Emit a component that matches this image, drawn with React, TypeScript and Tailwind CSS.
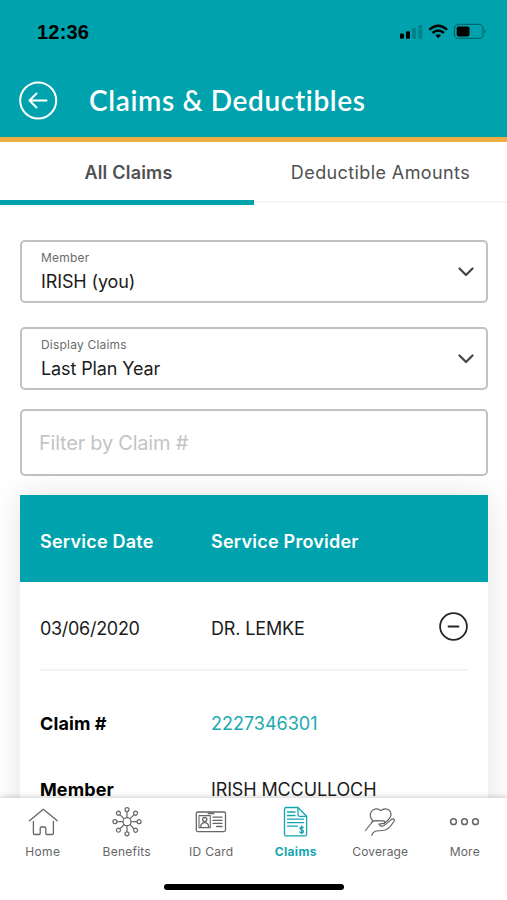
import React, { useState } from 'react';

const HomeIcon = () => (
  <svg width="32" height="32" viewBox="0 0 32 32" fill="none" stroke="currentColor" strokeWidth="1.3" strokeLinecap="round" strokeLinejoin="round">
    <path d="M2.5 14.7 L16.3 3.3 L30.3 14.7" />
    <path d="M6.4 15.5 V27.3 Q6.4 28.5 7.6 28.5 H12.2 Q13.2 28.5 13.2 27.3 V22.3 Q13.2 21 14.4 21 H17.6 Q18.8 21 18.8 22.3 V27.3 Q18.8 28.5 19.8 28.5 H25.2 Q26.4 28.5 26.4 27.3 V15.5" />
  </svg>
);

const BenefitsIcon = () => (
  <svg width="32" height="32" viewBox="0 0 32 32" fill="none" stroke="currentColor" strokeWidth="1.2">
    <circle cx="16" cy="15.7" r="4" />
    {[0, 45, 90, 135, 180, 225, 270, 315].map((angle) => (
      <g key={angle} transform={`rotate(${angle} 16 15.7)`}>
        <path d="M16 11.7 V5.6" />
        <circle cx="16" cy="3.6" r="2" />
      </g>
    ))}
  </svg>
);

const IdCardIcon = () => (
  <svg width="32" height="32" viewBox="0 0 32 32" fill="none" stroke="currentColor" strokeWidth="1.3" strokeLinecap="round" strokeLinejoin="round">
    <rect x="1.3" y="6" width="29.2" height="19.6" rx="1.5" />
    <path d="M13.5 7.4 H18.5" strokeWidth="1.8" />
    <rect x="4" y="9.6" width="11.3" height="12" strokeWidth="1.1" />
    <circle cx="9.7" cy="13.6" r="2.1" />
    <path d="M5.8 20.6 C6 17.6 7.7 16.6 9.7 16.6 S13.4 17.6 13.6 20.6" />
    <path d="M18 11.1 H27 M18 14.3 H27 M18 17.4 H27 M21.5 20.5 H27" />
  </svg>
);

const ClaimsIcon = () => (
  <svg width="32" height="32" viewBox="0 0 32 32" fill="none" stroke="currentColor" strokeWidth="1.3" strokeLinecap="round" strokeLinejoin="round">
    <path d="M18 1.5 H6 Q4.5 1.5 4.5 3 V28.4 Q4.5 29.9 6 29.9 H25.1 Q26.6 29.9 26.6 28.4 V10.3 Z" />
    <path d="M18 1.7 V8.8 Q18 10.3 19.5 10.3 H26.5" />
    <path d="M7.5 6 H15 M7.5 9.5 H15 M7.5 13.2 H23.5 M7.5 16.7 H23.5 M7.5 20.2 H17.5" />
    <path d="M23.2 21.7 C22.4 20.6 20 20.7 20 22.4 C20 24.3 23.5 23.4 23.5 25.4 C23.5 27.2 20.7 27.2 19.8 26 M21.7 19.9 V27.7" />
  </svg>
);

const CoverageIcon = () => (
  <svg width="32" height="32" viewBox="0 0 32 32" fill="none" stroke="currentColor" strokeWidth="1.2" strokeLinecap="round" strokeLinejoin="round">
    <path d="M8.6 14.5 C5.8 11.5 6.2 7.8 7.3 5.8 C9.3 2.2 14.2 2 16.8 4.6 C19.3 2 24.6 2.2 26.4 5.8 C27.8 8.8 26.5 11.8 23.8 14.3 L20 17.8" />
    <path d="M1.5 24.5 L7 17.5 C7.8 15.8 9.5 14.6 11.5 14.6 L19.5 14.8 C21.3 14.9 21.2 17.2 19.5 17.4 L15 18.2 C16 20.3 17.5 20.6 19.5 19.7 C22 18.5 24.8 15.8 27 13.7 C29 12 31.2 13.3 30 15.2 C27.8 18.8 24.8 22.8 21 24 C17.5 25 13.5 24.5 11.2 25.3 C9.6 25.9 8.4 27.5 7.7 29.2" />
  </svg>
);

const MoreIcon = () => (
  <svg width="32" height="32" viewBox="0 0 32 32" fill="none" stroke="currentColor" strokeWidth="1.5">
    <circle cx="4.5" cy="15.7" r="2.9" />
    <circle cx="15.5" cy="15.7" r="2.9" />
    <circle cx="26.5" cy="15.7" r="2.9" />
  </svg>
);

const NAV_ITEMS = [
  { label: 'Home', icon: HomeIcon, tracking: 'tracking-[0.4px] pl-px' },
  { label: 'Benefits', icon: BenefitsIcon, tracking: 'tracking-[0.25px]' },
  { label: 'ID Card', icon: IdCardIcon, tracking: 'tracking-[0.3px]' },
  { label: 'Claims', icon: ClaimsIcon, tracking: 'tracking-[0.35px]' },
  { label: 'Coverage', icon: CoverageIcon, tracking: 'tracking-[0.15px]' },
  { label: 'More', icon: MoreIcon, tracking: 'tracking-[0.2px]' },
];

const StatusBar = () => (
  <div className="flex h-16 items-center justify-between pl-[37px] pr-5">
    <span className="font-['Liberation_Sans',sans-serif] text-[20px] font-bold leading-none tracking-[0.2px] text-black">12:36</span>
    <svg width="90" height="20" viewBox="0 0 90 20" className="text-black">
      <g fill="currentColor">
        <rect x="3" y="11.5" width="4" height="5.2" rx="1" />
        <rect x="9" y="9.2" width="4" height="7.5" rx="1" />
        <rect x="15" y="6" width="4" height="10.7" rx="1" opacity="0.2" />
        <rect x="21.3" y="3" width="4" height="13.7" rx="1" opacity="0.2" />
        <path d="M41.2 16.3 L38.4 13.3 Q41.2 11.2 44 13.3 Z" />
      </g>
      <g fill="none" stroke="currentColor" strokeWidth="2.4">
        <path d="M32.3 7.6 Q41.2 -0.2 50.1 7.6" />
        <path d="M35.5 11 Q41.2 6 46.9 11" />
      </g>
      <rect x="57.5" y="2.4" width="28.5" height="14" rx="4" fill="none" stroke="currentColor" strokeWidth="1.2" opacity="0.35" />
      <rect x="59.7" y="4.4" width="12.8" height="10" rx="1.8" fill="currentColor" />
      <path d="M87.4 7.2 Q89.8 9.4 87.4 11.6 Z" fill="currentColor" opacity="0.4" />
    </svg>
  </div>
);

interface SelectBoxProps {
  label: string;
  value: string;
}

const SelectBox: React.FC<SelectBoxProps> = ({ label, value }) => (
  <button type="button" className="flex h-[63px] w-full items-center justify-between rounded-[5px] border-2 border-[#c1c1c1] bg-white pl-[19px] pr-3 text-left">
    <span className="flex flex-col pt-px">
      <span className="text-[12px] leading-[16px] tracking-[0.2px] text-[#6b6b6b]">{label}</span>
      <span className="mt-1 text-[18px] leading-[24px] tracking-[-0.12px] text-[#1c1c1c]">{value}</span>
    </span>
    <svg width="16" height="10" viewBox="0 0 16 10" fill="none" stroke="#444" strokeWidth="2.2" strokeLinecap="round" strokeLinejoin="round" className="mt-px">
      <path d="M1.5 1.5 L8 8 L14.5 1.5" />
    </svg>
  </button>
);

export default function App() {
  const [tab, setTab] = useState<'claims' | 'deductible'>('claims');
  const [filter, setFilter] = useState('');

  return (
    <div className="flex h-[900px] w-[507px] flex-col overflow-hidden bg-white font-[Inter,sans-serif]">
      {/* Header */}
      <header className="h-[142px] shrink-0 border-b-[5px] border-[#efad44] bg-[#00a3ad]">
        <StatusBar />
        <div className="flex h-[73px] items-center pl-[19px]">
          <button type="button" aria-label="Back">
            <svg width="39" height="39" viewBox="0 0 39 39" fill="none" stroke="white" strokeWidth="2" strokeLinecap="round" strokeLinejoin="round">
              <circle cx="19.2" cy="19.5" r="18" />
              <path d="M27.5 19.5 H10.5 M17.5 12.5 L10.5 19.5 L17.5 26.5" />
            </svg>
          </button>
          <h1 className="ml-[31px] whitespace-nowrap pb-0.5 font-[Lato,sans-serif] text-[28px] font-semibold leading-none tracking-[0.65px] text-white">Claims &amp; Deductibles</h1>
        </div>
      </header>

      {/* Tabs */}
      <div className="flex h-[63px] shrink-0 text-[18px] text-[#505050]">
        <button
          type="button"
          onClick={() => setTab('claims')}
          className={`w-[254px] whitespace-nowrap pl-[3px] ${tab === 'claims' ? 'border-b-[5px] border-[#00a3ad] pt-0.5 font-semibold tracking-[0.2px]' : 'border-b-2 border-[#f5f5f5] tracking-[0.4px]'}`}
        >
          All Claims
        </button>
        <button
          type="button"
          onClick={() => setTab('deductible')}
          className={`flex-1 whitespace-nowrap ${tab === 'deductible' ? 'border-b-[5px] border-[#00a3ad] font-semibold' : 'mb-0.5 border-b-2 border-[#f5f5f5] pt-0.5 tracking-[0.4px]'}`}
        >
          Deductible Amounts
        </button>
      </div>

      <main className="min-h-0 flex-1 overflow-hidden pl-5 pr-[19px] pt-[35px]">
        {/* Filters */}
        <div className="flex flex-col gap-6">
          <SelectBox label="Member" value="IRISH (you)" />
          <SelectBox label="Display Claims" value="Last Plan Year" />
        </div>
        <input
          value={filter}
          onChange={(e) => setFilter(e.target.value)}
          placeholder="Filter by Claim #"
          className="mt-[19px] block h-[67px] w-full rounded-[5px] border-2 border-[#c1c1c1] bg-white px-[17px] text-[20px] tracking-[-0.23px] outline-none placeholder:text-[#c4c4c4]"
        />

        {/* Claims table */}
        <section className="mt-[19px] h-[400px] bg-white text-[18px] text-[#1c1c1c] shadow-[0_0_30px_rgba(0,0,0,0.11)]">
          <div className="grid h-[87px] grid-cols-[171px_1fr] items-center bg-[#00a3ad] px-5 pt-[5px] font-semibold tracking-[0.23px] text-white">
            <span>Service Date</span>
            <span>Service Provider</span>
          </div>
          <div className="mx-5 grid h-[89px] grid-cols-[171px_1fr_29px] items-center border-b-2 border-[#f4f4f4]">
            <span className="pt-1.5 tracking-[-0.3px]">03/06/2020</span>
            <span className="pt-1.5 tracking-[-0.15px]">DR. LEMKE</span>
            <svg width="29" height="29" viewBox="0 0 29 29" fill="none" stroke="#262626" strokeWidth="1.8" strokeLinecap="round" className="mt-0.5">
              <circle cx="14.5" cy="14.5" r="13.4" />
              <path d="M9.5 14.5 H19.5" />
            </svg>
          </div>
          <dl className="grid grid-cols-[171px_1fr] gap-y-[38px] px-5 pt-[39px] leading-7">
            <dt className="font-bold tracking-[0.1px] text-black">Claim #</dt>
            <dd className="text-[#1ba9b2]">2227346301</dd>
            <dt className="font-bold tracking-[0.1px] text-black">Member</dt>
            <dd className="tracking-[-0.13px]">IRISH MCCULLOCH</dd>
          </dl>
        </section>
      </main>

      {/* Bottom navigation */}
      <nav className="relative z-10 flex h-[102px] shrink-0 flex-col items-center bg-white shadow-[0_-1px_6px_rgba(0,0,0,0.2)]">
        <div className="grid w-full grid-cols-6 pt-2">
          {NAV_ITEMS.map(({ label, icon: Icon, tracking }) => (
            <button
              type="button"
              key={label}
              className={`flex flex-col items-center gap-1.5 text-[12px] leading-4 ${tracking} ${label === 'Claims' ? 'font-bold text-[#13a6af]' : 'text-[#666]'}`}
            >
              <Icon />
              {label}
            </button>
          ))}
        </div>
        <div className="mt-6 h-1.5 w-[180px] rounded-full bg-black" />
      </nav>
    </div>
  );
}
